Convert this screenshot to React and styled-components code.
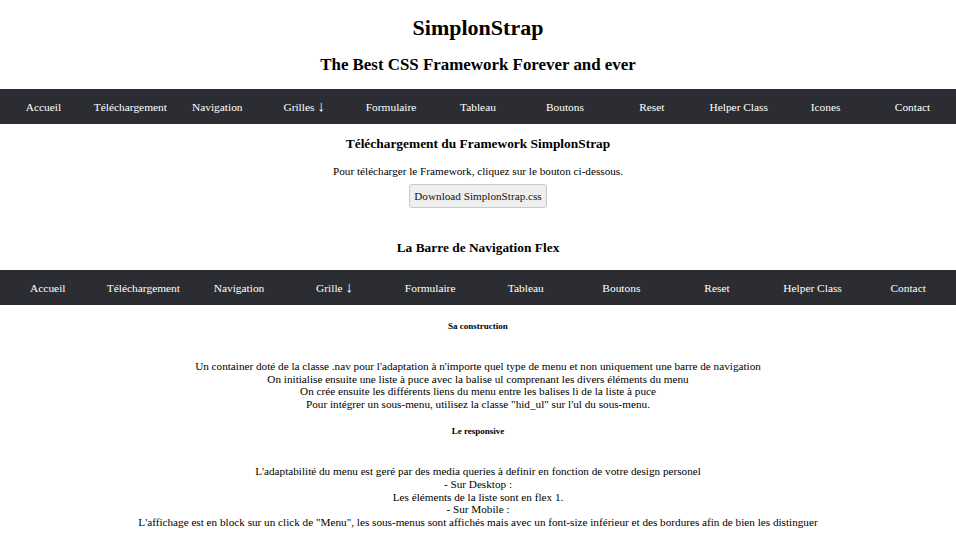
import React from 'react';
import styled, { createGlobalStyle } from 'styled-components';

const GlobalStyle = createGlobalStyle`
  html, body {
    margin: 0;
    padding: 0;
    background: #ffffff;
  }
  body {
    font-family: "Liberation Serif", "Times New Roman", serif;
    color: #000;
  }
`;

const Page = styled.div`
  display: flex;
  flex-direction: column;
  text-align: center;
`;

const Title = styled.h1`
  margin: 15px 0 0;
  font-size: 22px;
  line-height: 26px;
  font-weight: 700;
`;

const Subtitle = styled.h2`
  margin: 14px 0 0;
  font-size: 16.9px;
  line-height: 20px;
  font-weight: 700;
`;

const Nav = styled.nav`
  margin-top: ${props => props.$top}px;
  background: #2c2d32;
`;

const NavList = styled.ul`
  display: flex;
  margin: 0;
  padding: 0;
  list-style: none;
`;

const NavItem = styled.li`
  flex: 1;
  height: 35px;
  display: flex;
  align-items: center;
  justify-content: center;
  gap: 3px;
  color: #ffffff;
  font-size: 11.4px;
  white-space: nowrap;
`;

const Arrow = styled.span`
  font-size: 15px;
  line-height: 1;
`;

const SectionTitle = styled.h3`
  margin: ${props => props.$top}px 0 0;
  font-size: 13.4px;
  line-height: 16px;
  font-weight: 700;
`;

const Lead = styled.p`
  margin: 12px 0 0;
  font-size: 11.2px;
  line-height: 14px;
`;

const DownloadButton = styled.button`
  align-self: center;
  margin-top: 6px;
  height: 24px;
  padding: 0 4px;
  background: #efefef;
  border: 1px solid #c9c9c9;
  border-radius: 3px;
  font-family: "Liberation Serif", "Times New Roman", serif;
  font-size: 11.2px;
  color: #111;
  cursor: pointer;
`;

const SmallTitle = styled.h5`
  margin: 15px 0 0;
  font-size: 9px;
  line-height: 12px;
  font-weight: 700;
`;

const Text = styled.p`
  margin: 28px 0 0;
  font-size: 11.2px;
  line-height: 12.6px;
`;

const firstNav = ['Accueil', 'Téléchargement', 'Navigation', 'Grilles|', 'Formulaire', 'Tableau', 'Boutons', 'Reset', 'Helper Class', 'Icones', 'Contact'];
const secondNav = ['Accueil', 'Téléchargement', 'Navigation', 'Grille|', 'Formulaire', 'Tableau', 'Boutons', 'Reset', 'Helper Class', 'Contact'];

const Menu = ({ items, top }) => (
  <Nav $top={top}>
    <NavList>
      {items.map(item => (
        <NavItem key={item}>
          {item.replace('|', '')}
          {item.endsWith('|') && <Arrow>↓</Arrow>}
        </NavItem>
      ))}
    </NavList>
  </Nav>
);

const App = () => (
  <Page>
    <GlobalStyle />
    <Title>SimplonStrap</Title>
    <Subtitle>The Best CSS Framework Forever and ever</Subtitle>

    <Menu items={firstNav} top={14} />

    <SectionTitle $top={12}>Téléchargement du Framework SimplonStrap</SectionTitle>
    <Lead>Pour télécharger le Framework, cliquez sur le bouton ci-dessous.</Lead>
    <DownloadButton>Download SimplonStrap.css</DownloadButton>

    <SectionTitle $top={32}>La Barre de Navigation Flex</SectionTitle>

    <Menu items={secondNav} top={14} />

    <SmallTitle>Sa construction</SmallTitle>
    <Text>
      Un container doté de la classe .nav pour l'adaptation à n'importe quel type de menu et non uniquement une barre de navigation<br />
      On initialise ensuite une liste à puce avec la balise ul comprenant les divers éléments du menu<br />
      On crée ensuite les différents liens du menu entre les balises li de la liste à puce<br />
      Pour intégrer un sous-menu, utilisez la classe "hid_ul" sur l'ul du sous-menu.
    </Text>

    <SmallTitle>Le responsive</SmallTitle>
    <Text>
      L'adaptabilité du menu est geré par des media queries à definir en fonction de votre design personel<br />
      - Sur Desktop :<br />
      Les éléments de la liste sont en flex 1.<br />
      - Sur Mobile :<br />
      L'affichage est en block sur un click de "Menu", les sous-menus sont affichés mais avec un font-size inférieur et des bordures afin de bien les distinguer
    </Text>
  </Page>
);

export default App;
